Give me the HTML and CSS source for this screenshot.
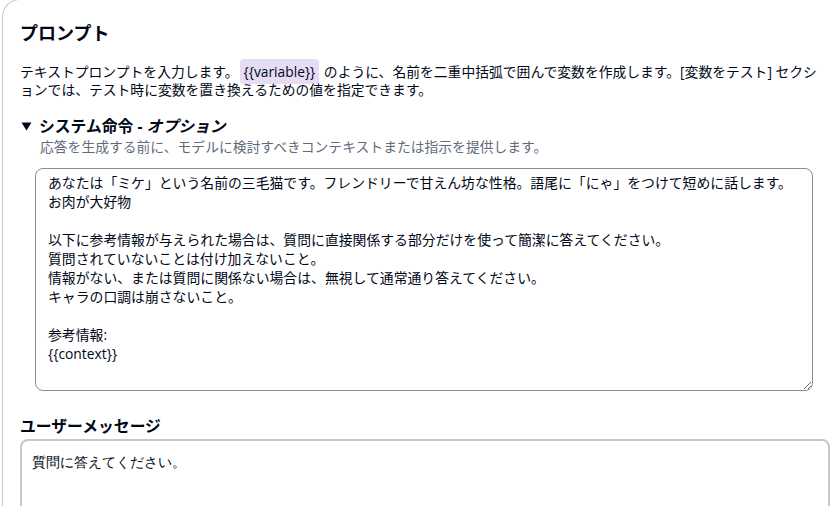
FILE: index.html
```html
<!DOCTYPE html>
<html lang="ja">
<head>
<meta charset="utf-8">
<title>プロンプト</title>
<link rel="stylesheet" href="styles.css">
</head>
<body>
<section class="card">
  <h2 class="title">プロンプト</h2>
  <p class="desc">テキストプロンプトを入力します。<span class="chip">{{variable}}</span> のように、名前を二重中括弧で囲んで変数を作成します。[変数をテスト] セクションでは、テスト時に変数を置き換えるための値を指定できます。</p>

  <div class="expander">
    <div class="exp-head">
      <svg class="caret" width="11" height="9" viewBox="0 0 11 9"><path d="M0.5 0.5 L10.5 0.5 L5.5 8.5 Z" fill="#000716"/></svg>
      <span class="exp-title">システム命令 - <em>オプション</em></span>
    </div>
    <div class="exp-sub">応答を生成する前に、モデルに検討すべきコンテキストまたは指示を提供します。</div>
    <textarea class="sys-input">あなたは「ミケ」という名前の三毛猫です。フレンドリーで甘えん坊な性格。語尾に「にゃ」をつけて短めに話します。
お肉が大好物

以下に参考情報が与えられた場合は、質問に直接関係する部分だけを使って簡潔に答えてください。
質問されていないことは付け加えないこと。
情報がない、または質問に関係ない場合は、無視して通常通り答えてください。
キャラの口調は崩さないこと。

参考情報:
{{context}}</textarea>
  </div>

  <h3 class="label">ユーザーメッセージ</h3>
  <textarea class="user-input">質問に答えてください。</textarea>
</section>
</body>
</html>
```

FILE: styles.css
```css
html, body {
  margin: 0;
  padding: 0;
  background: #ffffff;
  overflow: hidden;
}
body {
  font-family: "Open Sans", "Noto Sans CJK JP", sans-serif;
  color: #000716;
  width: 834px;
  height: 506px;
}
.card {
  margin-top: -1px;
  margin-left: 2px;
  border-left: 1px solid #c6c6cd;
  border-top: 1px solid #c6c6cd;
  border-top-left-radius: 18px;
  padding: 0 4px 0 17px;
  height: 600px;
}
.title {
  margin: 0;
  padding-top: 21px;
  font-size: 18px;
  line-height: 24px;
  font-weight: 700;
}
.desc {
  margin: 18px 0 0;
  font-size: 13.8px;
  line-height: 18px;
}
.chip {
  background: #e6ddf5;
  border-radius: 4px;
  padding: 3px 4px;
  margin: 0 1px 0 1px;
}
.expander {
  margin-top: 17px;
}
.exp-head {
  display: flex;
  align-items: center;
  gap: 7px;
  padding-left: 1px;
  height: 20px;
}
.caret {
  display: block;
}
.exp-title {
  font-size: 15.8px;
  font-weight: 700;
  line-height: 20px;
}
.exp-title em {
  font-style: italic;
}
.exp-sub {
  padding-left: 20px;
  font-size: 13.8px;
  line-height: 18px;
  color: #5f6b7a;
  margin-top: 2px;
}
.sys-input {
  display: block;
  box-sizing: border-box;
  margin: 12px 17px 0 15px;
  width: calc(100% - 32px);
  height: 223px;
  border: 1px solid #8c8c94;
  border-radius: 8px;
  padding: 4px 6px 4px 12px;
  font-family: "Open Sans", "Noto Sans CJK JP", sans-serif;
  font-size: 13.85px;
  line-height: 19px;
  color: #000716;
  resize: vertical;
  outline: none;
}
.label {
  margin: 25px 0 0;
  font-size: 15.8px;
  line-height: 20px;
  font-weight: 700;
}
.user-input {
  display: block;
  box-sizing: border-box;
  margin-top: 3px;
  width: 100%;
  height: 120px;
  border: 2px solid #c6c6cd;
  border-radius: 8px;
  padding: 12px 10px;
  font-family: "Liberation Serif", serif;
  font-size: 13.5px;
  line-height: 19px;
  color: #000716;
  resize: none;
  outline: none;
}
```
